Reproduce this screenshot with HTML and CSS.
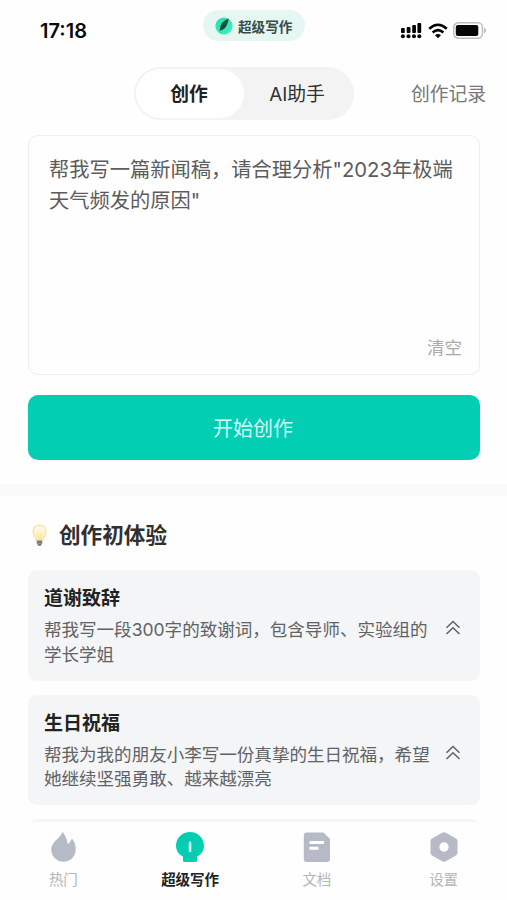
FILE: index.html
```html
<!DOCTYPE html>
<html lang="zh-CN">
<head>
<meta charset="utf-8">
<title>超级写作</title>
<link rel="stylesheet" href="styles.css">
</head>
<body>
<div class="app">
  <header class="status">
    <span class="time">17:18</span>
    <div class="island">
      <svg width="18" height="18" viewBox="0 0 18 18"><defs><linearGradient id="lg" x1="0" y1="0" x2="1" y2="1"><stop offset="0" stop-color="#20dfb4"/><stop offset="1" stop-color="#48edb5"/></linearGradient></defs><circle cx="9" cy="9" r="8.6" fill="url(#lg)"/><path d="M13.800 1.800C9.300 3.200 5.800 6 5.300 10.200L4.500 14 6.200 13.200C10.400 12.500 12.200 8.400 13.800 1.800Z" fill="#144b40"/></svg>
      <span>超级写作</span>
    </div>
    <div class="signals">
      <svg width="22" height="17" viewBox="0 0 22 17"><g fill="#050505"><rect x="1" y="6" width="3.800" height="5" rx="1"/><rect x="6.700" y="5" width="3.800" height="6" rx="1"/><rect x="12.200" y="3" width="3.800" height="8" rx="1"/><rect x="17.400" y="1" width="3.800" height="10" rx="1"/><circle cx="2.900" cy="14.200" r="2"/><circle cx="8.500" cy="14.200" r="2"/><circle cx="14" cy="14.200" r="2"/><circle cx="19.300" cy="14.200" r="2"/></g></svg>
      <svg class="wifi" width="20" height="16" viewBox="0 0 20 16"><g fill="none" stroke="#050505" stroke-width="2.600"><path d="M1.200 5.700Q10-2.200 18.800 5.700"/><path d="M4.600 9.400Q10 4.800 15.400 9.400"/></g><path d="M7 12.200Q10 9.800 13 12.200L10 15.200Z" fill="#050505"/></svg>
      <svg class="battery" width="34" height="17" viewBox="0 0 34 17"><rect x=".8" y=".8" width="28.600" height="15.400" rx="4.500" fill="#fff" stroke="#bdbdbd" stroke-width="1.500"/><rect x="2.800" y="3" width="22.500" height="11" rx="2" fill="#050505"/><path d="M31 5.500Q33.200 7 33.200 8.500T31 11.500Z" fill="#bdbdbd"/></svg>
    </div>
  </header>

  <div class="tabs">
    <div class="segment"><span class="seg active">创作</span><span class="seg">AI助手</span></div>
    <span class="history">创作记录</span>
  </div>

  <main>
    <section class="editor">
      <p>帮我写一篇新闻稿&#xFF0C;请合理分析"2023年极端<br>天气频发的原因"</p>
      <span class="clear">清空</span>
    </section>
    <div class="start">开始创作</div>
  </main>
  <div class="divider"></div>

  <section class="samples">
    <h2>
      <svg width="15" height="23" viewBox="0 0 15 23"><defs><linearGradient id="bulb" x1="0" y1="0" x2="0" y2="1"><stop offset="0" stop-color="#fffbe8"/><stop offset="1" stop-color="#fbeeb0"/></linearGradient></defs><path d="M7.500 1C3.800 1 1 3.700 1 7.300C1 11.200 4 12.800 4.300 16.500H10.700C11 12.800 14 11.200 14 7.300C14 3.700 11.200 1 7.500 1Z" fill="url(#bulb)" stroke="#f4e3a6" stroke-width="1.200"/><path d="M5.700 9L6.800 15.500M9.300 9L8.200 15.500" stroke="#f7e196" fill="none"/><path d="M4.700 16.300H10.300V19.500L8.800 21.700H6.200L4.700 19.500Z" fill="#99978e"/><path d="M5 18.200H10M6.200 21H8.800" stroke="#5f605c"/></svg>
      <span>创作初体验</span>
    </h2>
    <article class="card">
      <h3>道谢致辞</h3>
      <div class="row">
        <p>帮我写一段300字的致谢词&#xFF0C;包含导师、实验组的<br>学长学姐</p>
        <svg width="16" height="16" viewBox="0 0 16 16"><path d="M1.500 7.700 8 1.500 14.500 7.700M1.500 14 8 7.800 14.500 14"/></svg>
      </div>
    </article>
    <article class="card">
      <h3>生日祝福</h3>
      <div class="row">
        <p>帮我为我的朋友小李写一份真挚的生日祝福&#xFF0C;希望<br>她继续坚强勇敢、越来越漂亮</p>
        <svg width="16" height="16" viewBox="0 0 16 16"><path d="M1.500 7.700 8 1.500 14.500 7.700M1.500 14 8 7.800 14.500 14"/></svg>
      </div>
    </article>
    <div class="card peek"></div>
  </section>

  <nav>
    <div class="item">
      <svg width="30" height="32" viewBox="0 0 30 32"><path d="M14.500 1C16.500 3.200 19.200 7.500 19.800 13.200C21.800 11.800 23 9.800 23.900 7.600C26.200 10.500 27.700 14.200 27.700 18C27.700 25.500 22.500 30.700 15.500 30.700S3.200 25.300 3.200 18.300C3.200 11 12 7.500 14.500 1Z" fill="#b5bac6"/></svg>
      <span>热门</span>
    </div>
    <div class="item on">
      <svg width="30" height="32" viewBox="0 0 30 32"><path d="M15 1C7.300 1 1 7 1 14.700C1 19.500 3.800 23.300 8 25.600V29.500Q8 31 9.500 31H20.500Q22 31 22 29.500V25.600C26.200 23.300 29 19.500 29 14.700C29 7 22.700 1 15 1Z" fill="#05cdb2"/><path d="M15 11.800V20" stroke="#d9fff7" stroke-width="2.600" stroke-linecap="round"/></svg>
      <span>超级写作</span>
    </div>
    <div class="item">
      <svg width="30" height="32" viewBox="0 0 30 32"><path d="M4.500 1.500H21.500L28 8V28Q28 31 25 31H4.500Q1.800 31 1.800 28V4.500Q1.800 1.500 4.500 1.500Z" fill="#b5bac6"/><path d="M7.500 11.500H22M7.500 17.300H16.500" stroke="#fff" stroke-width="3"/></svg>
      <span>文档</span>
    </div>
    <div class="item">
      <svg width="30" height="32" viewBox="0 0 30 32"><path d="M13.200 1.800Q15 .8 16.800 1.800L27 7.600Q28.500 8.500 28.500 10.300V21.700Q28.500 23.500 27 24.400L16.800 30.200Q15 31.200 13.200 30.200L3 24.400Q1.500 23.500 1.500 21.700V10.300Q1.500 8.500 3 7.600Z" fill="#b5bac6"/><circle cx="15" cy="16" r="4.700" fill="#fff"/></svg>
      <span>设置</span>
    </div>
  </nav>
</div>
</body>
</html>
```
FILE: styles.css
```css
* { box-sizing: border-box; }
body, h2, h3, p { margin: 0; }
body {
  background: #fefefe;
  font-family: Inter, "Noto Sans CJK SC", sans-serif;
  color: #303030;
}
.app {
  width: 507px;
  height: 900px;
  display: flex;
  flex-direction: column;
  overflow: hidden;
}
.status {
  height: 67px;
  flex: none;
  display: grid;
  grid-template-columns: 203px 102px 1fr;
  align-items: start;
  padding-top: 10px;
}
.time {
  padding: 9px 0 0 40px;
  font-size: 20px;
  line-height: 24px;
  font-weight: 600;
  color: #0a0a0a;
}
.island {
  height: 31px;
  border-radius: 16px;
  background: #e6f6f3;
  display: flex;
  align-items: center;
  padding-left: 12px;
  gap: 5px;
  font-size: 13.6px;
  font-weight: 700;
  color: #3b4b49;
  white-space: nowrap;
}
.signals {
  display: flex;
  align-items: center;
  justify-content: flex-end;
  padding: 12px 20px 0 0;
}
.wifi { margin: 0 5px 0 6px; }
.tabs {
  height: 53px;
  flex: none;
  display: flex;
  align-items: center;
  justify-content: space-between;
  padding: 0 21px 0 134px;
}
.segment {
  width: 220px;
  height: 53px;
  padding: 2px;
  display: flex;
  border-radius: 27px;
  background: #f3f3f3;
}
.seg {
  flex: 1;
  display: flex;
  align-items: center;
  justify-content: center;
  font-size: 18.8px;
  padding: 0 2px 2px 0;
}
.active {
  background: #fff;
  border-radius: 25px;
  font-weight: 700;
  color: #222;
}
.history { font-size: 18.8px; color: #777; padding-bottom: 2px; }
main { padding: 15px 27px 0 28px; flex: none; }
.editor {
  height: 240px;
  border: 1.500px solid #eee;
  border-radius: 10px;
  padding: 18px 17px 13px 20px;
  display: flex;
  flex-direction: column;
  justify-content: space-between;
}
.editor p {
  font-size: 20.25px;
  line-height: 31px;
  color: #5c5c5c;
  white-space: nowrap;
}
.clear { align-self: flex-end; font-size: 17.5px; line-height: 27px; color: #aaa; }
.start {
  margin-top: 20px;
  height: 65px;
  border-radius: 10px;
  background: #02ceb4;
  color: #d5fff8;
  font-size: 20px;
  display: flex;
  align-items: center;
  justify-content: center;
  padding-right: 2px;
}
.divider { margin-top: 24px; height: 12px; flex: none; background: #fafafa; }
.samples {
  flex: 1;
  min-height: 0;
  overflow: hidden;
  padding: 22px 27px 0 28px;
}
h2 {
  height: 34px;
  display: flex;
  align-items: center;
  gap: 12px;
  padding-left: 4px;
  margin-bottom: 18px;
  font-size: 21.6px;
  font-weight: 700;
}
h2 span { padding-bottom: 3px; }
.card {
  height: 110.500px;
  margin-bottom: 14px;
  padding: 14px 19px 0 16px;
  border-radius: 9px;
  background: #f4f5f7;
}
h3 {
  font-size: 19px;
  line-height: 29px;
  font-weight: 700;
  color: #222;
}
.row {
  display: flex;
  justify-content: space-between;
  align-items: flex-start;
  padding-top: 5px;
}
.row p {
  font-size: 17.55px;
  line-height: 24.700px;
  color: #616264;
  white-space: nowrap;
}
.row svg {
  flex: none;
  margin-top: 2px;
  fill: none;
  stroke: #606164;
  stroke-width: 1.500;
}
nav {
  height: 78px;
  flex: none;
  display: grid;
  grid-template-columns: repeat(4, 1fr);
  background: #fefefe;
}
.item {
  display: flex;
  flex-direction: column;
  align-items: center;
  padding-top: 9px;
  font-size: 14.5px;
  line-height: 22px;
  color: #b5b5b5;
}
.item span { margin-top: 6px; }
.on { color: #222; font-weight: 700; }
```
